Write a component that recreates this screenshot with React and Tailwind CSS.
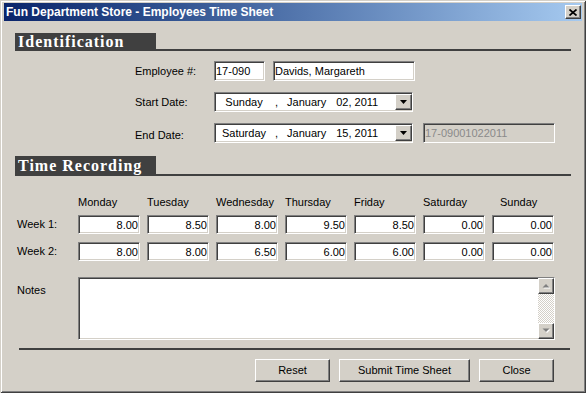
const sunken =
  "border border-t-[#808080] border-l-[#808080] border-b-white border-r-white shadow-[inset_1px_1px_0_#404040,inset_-1px_-1px_0_#d4d0c8]";
const raised =
  "border border-t-white border-l-white border-b-[#404040] border-r-[#404040] shadow-[inset_-1px_-1px_0_#808080]";

const days = ["Monday", "Tuesday", "Wednesday", "Thursday", "Friday", "Saturday", "Sunday"];
const weeks = [
  { label: "Week 1:", hours: ["8.00", "8.50", "8.00", "9.50", "8.50", "0.00", "0.00"] },
  { label: "Week 2:", hours: ["8.00", "8.00", "6.50", "6.00", "6.00", "0.00", "0.00"] },
];

function SectionHeader({ title, tall }) {
  return (
    <div className="flex items-end">
      <div
        className={`w-[141px] ${tall ? "h-[20px]" : "h-[18px]"} bg-[#404040] flex items-center pl-[3px] text-white font-bold text-[16px] tracking-[1px] font-['Liberation_Serif',serif]`}
      >
        {title}
      </div>
      <div className="flex-1 h-[2px] bg-[#404040]" />
    </div>
  );
}

function DatePicker({ day, date }) {
  return (
    <div className={`w-[199px] h-[20px] bg-white flex items-center ${sunken}`}>
      <span className="w-[58px] text-center">{day}</span>
      <span className="ml-[2px]">,</span>
      <span className="ml-[9px]">January</span>
      <span className="ml-[10px] flex-1">{date}</span>
      <div className={`w-[17px] h-[16px] bg-[#d4d0c8] flex items-center justify-center ${raised}`}>
        <svg width="7" height="4" viewBox="0 0 7 4">
          <polygon points="0,0 7,0 3.5,4" fill="#000" />
        </svg>
      </div>
    </div>
  );
}

function ScrollArrow({ up }) {
  return (
    <div className={`w-[16px] h-[16px] bg-[#d4d0c8] flex items-center justify-center ${raised}`}>
      <svg width="9" height="6" viewBox="0 0 9 6">
        <polygon
          points={up ? "1.5,5.5 8.5,5.5 5,2" : "1.5,1.5 8.5,1.5 5,5"}
          fill="#fff"
        />
        <polygon points={up ? "0.5,4.5 7.5,4.5 4,1" : "0.5,0.5 7.5,0.5 4,4"} fill="#808080" />
      </svg>
    </div>
  );
}

export default function App() {
  return (
    <div className="w-[586px] h-[393px] bg-[#d4d0c8] pt-[3px] px-[4px] flex flex-col font-['Liberation_Sans',Arial,sans-serif] text-[11px] text-black shadow-[inset_1px_1px_0_#d4d0c8,inset_-1px_-1px_0_#404040,inset_2px_2px_0_#fff,inset_-2px_-2px_0_#808080]">
      {/* title bar */}
      <div className="h-[18px] bg-linear-to-r from-[#0a246a] to-[#a6caf0] flex items-center justify-between pl-[2px] pr-[1px]">
        <span className="text-white font-bold text-[12px]">Fun Department Store - Employees Time Sheet</span>
        <div className={`w-[16px] h-[14px] bg-[#d4d0c8] flex items-center justify-center ${raised}`}>
          <svg width="8" height="7" viewBox="0 0 8 7">
            <path d="M0.5 0.5L7.5 6.5M7.5 0.5L0.5 6.5" stroke="#000" strokeWidth="1.7" />
          </svg>
        </div>
      </div>

      <div className="px-[11px] flex flex-col">
        <div className="mt-[12px]">
          <SectionHeader title="Identification" />
        </div>

        {/* identification */}
        <div className="pl-[120px] flex flex-col gap-[11px] mt-[10px]">
          <div className="flex items-center h-[20px]">
            <span className="w-[79px]">Employee #:</span>
            <input readOnly value="17-090" className={`w-[51px] h-[20px] bg-white px-[1px] outline-none ${sunken}`} />
            <input
              readOnly
              value="Davids, Margareth"
              className={`ml-[8px] w-[142px] h-[20px] bg-white px-[1px] outline-none ${sunken}`}
            />
          </div>
          <div className="flex items-center h-[20px]">
            <span className="w-[79px]">Start Date:</span>
            <DatePicker day="Sunday" date="02, 2011" />
          </div>
          <div className="flex items-center h-[20px]">
            <span className="w-[79px] pt-[5px]">End Date:</span>
            <DatePicker day="Saturday" date="15, 2011" />
            <input
              readOnly
              value="17-09001022011"
              className={`ml-[10px] w-[132px] h-[20px] bg-[#d4d0c8] text-[#8a8a8a] px-[1px] outline-none ${sunken}`}
            />
          </div>
        </div>

        <div className="mt-[13px]">
          <SectionHeader title="Time Recording" tall />
        </div>

        {/* time grid */}
        <div className="pl-[2px] mt-[20px] flex flex-col">
          <div className="flex h-[13px] leading-[13px]">
            <span className="w-[61px]" />
            <div className="grid grid-cols-[repeat(7,62px)] gap-x-[7px]">
              {days.map((d) => (
                <span key={d} className={d === "Sunday" ? "pl-[8px]" : ""}>
                  {d}
                </span>
              ))}
            </div>
          </div>
          {weeks.map((w, i) => (
            <div key={w.label} className={`flex items-center ${i === 0 ? "mt-[6px]" : "mt-[8px]"}`}>
              <span className="w-[61px]">{w.label}</span>
              <div className="grid grid-cols-[repeat(7,62px)] gap-x-[7px]">
                {w.hours.map((h, j) => (
                  <input
                    key={j}
                    readOnly
                    value={h}
                    className={`h-[19px] bg-white text-right pr-[1px] outline-none ${sunken}`}
                  />
                ))}
              </div>
            </div>
          ))}

          <div className="flex mt-[16px]">
            <span className="w-[61px] pt-[5px]">Notes</span>
            <div className={`w-[477px] h-[63px] bg-white flex justify-end ${sunken}`}>
              <div className="w-[16px] flex flex-col">
                <ScrollArrow up />
                <div className="flex-1 bg-[image:repeating-conic-gradient(#fff_0%_25%,#d4d0c8_0%_50%)] bg-[length:2px_2px]" />
                <ScrollArrow />
              </div>
            </div>
          </div>
        </div>

        <div className="ml-[4px] mr-[1px] mt-[8px] h-[2px] bg-[#404040]" />

        {/* buttons */}
        <div className="flex justify-end gap-[9px] mt-[9px] mr-[17px]">
          <button className={`w-[75px] h-[23px] bg-[#d4d0c8] ${raised}`}>Reset</button>
          <button className={`w-[131px] h-[23px] bg-[#d4d0c8] ${raised}`}>Submit Time Sheet</button>
          <button className={`w-[75px] h-[23px] bg-[#d4d0c8] ${raised}`}>Close</button>
        </div>
      </div>
    </div>
  );
}
